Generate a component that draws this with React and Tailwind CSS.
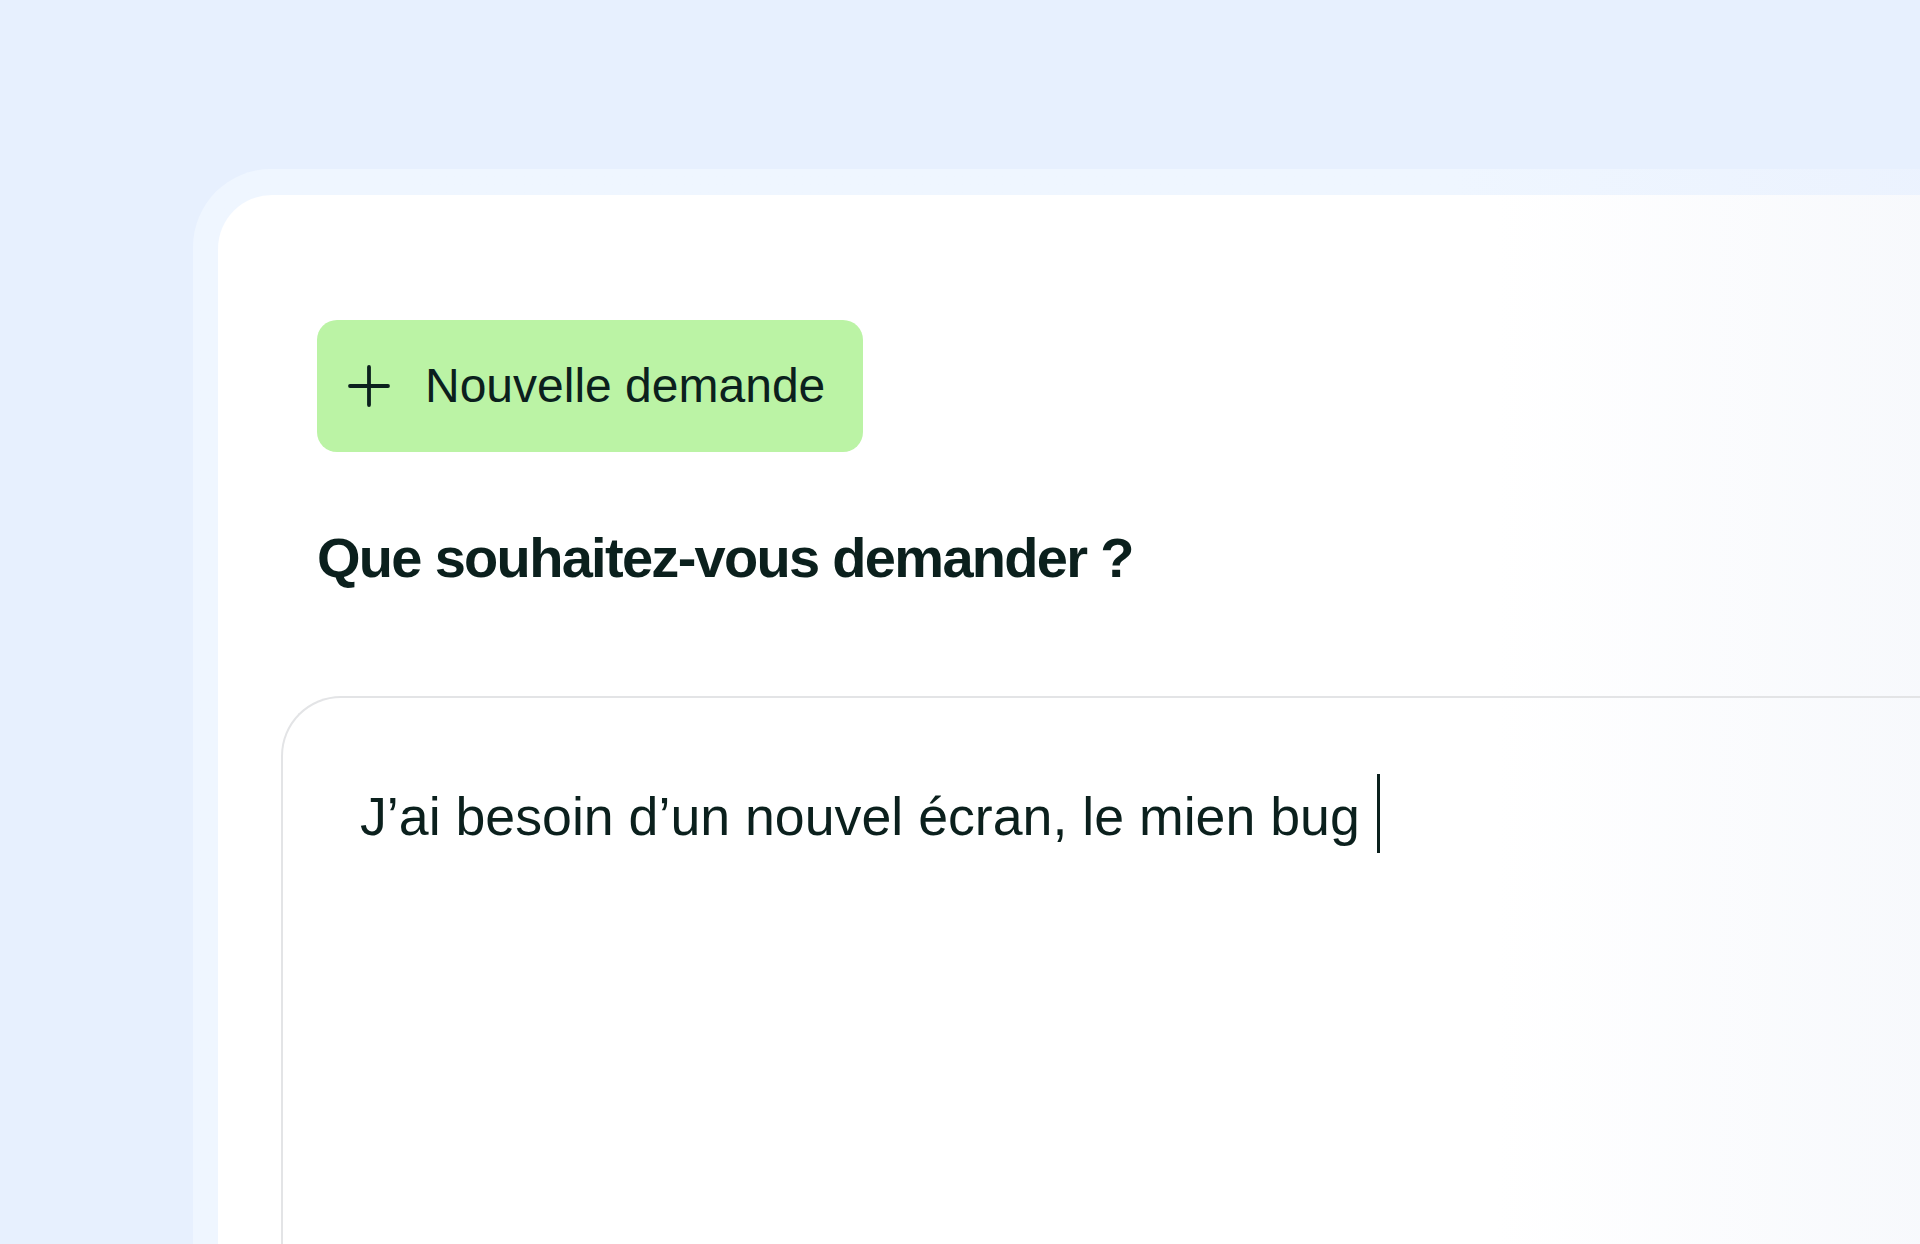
import React from 'react';

function PlusIcon() {
  return (
    <svg width="42" height="42" viewBox="0 0 42 42" fill="none" className="shrink-0">
      <line x1="21" y1="2" x2="21" y2="40" stroke="#0b201d" strokeWidth="3.8" strokeLinecap="round" />
      <line x1="2" y1="21" x2="40" y2="21" stroke="#0b201d" strokeWidth="3.8" strokeLinecap="round" />
    </svg>
  );
}

export default function App() {
  return (
    <div
      className="h-[1244px] w-[1920px] overflow-hidden bg-[#e7f0fe] pl-[193px] pt-[169px] text-[#0b201d]"
      style={{ fontFamily: '"Liberation Sans", Arial, sans-serif' }}
    >
      {/* cadre clair */}
      <div className="h-[1200px] w-[1800px] rounded-tl-[78px] bg-linear-to-r from-[#eff6ff] from-70% to-[#ebf2fe] pl-[25px] pt-[26px]">
        {/* carte blanche */}
        <div className="h-full rounded-tl-[54px] bg-linear-to-r from-white from-[72%] to-[#f6f8fc] pl-[63px] pt-[125px]">
          <div className="pl-[36px]">
            <button className="flex h-[132px] w-[546px] items-center gap-[35px] rounded-[20px] bg-[#bbf3a5] pl-[31px] pr-[37px] text-[48px] leading-none text-[#0b201d]">
              <PlusIcon />
              <span>Nouvelle demande</span>
            </button>

            <h1 className="mt-[78px] text-[56px] font-bold leading-[56px] tracking-[-1.7px]">
              Que souhaitez-vous demander ?
            </h1>
          </div>

          {/* zone de saisie */}
          <div className="mt-[110px] h-[700px] rounded-tl-[60px] border-2 border-r-0 border-[#e3e4e6] pl-[77px] pt-[76px]">
            <p className="text-[53.7px] leading-[1.2]">
              J’ai besoin d’un nouvel écran, le mien bug{' '}
              <span className="ml-[2px] inline-block h-[79px] w-[3px] bg-[#0b201d] align-[-18px]" />
            </p>
          </div>
        </div>
      </div>
    </div>
  );
}
